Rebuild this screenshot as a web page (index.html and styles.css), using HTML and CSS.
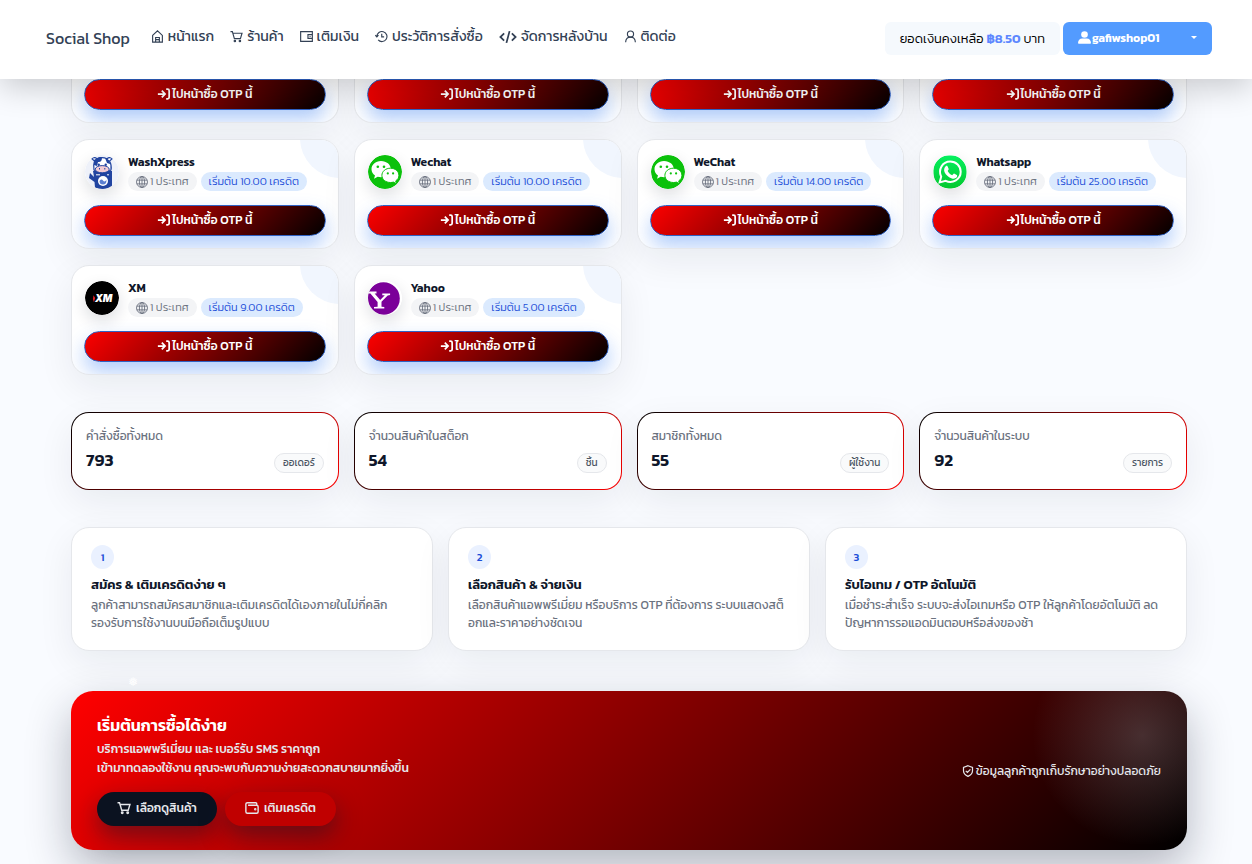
FILE: index.html
```html
<!DOCTYPE html>
<html lang="th">
<head>
  <meta charset="UTF-8" />
  <meta name="viewport" content="width=device-width, initial-scale=1.0" />
  <title>Social Shop</title>
  <link rel="stylesheet" href="styles.css">
</head>
<body>
  <!-- shared icons -->
  <svg class="sprite" aria-hidden="true">
    <symbol id="i-home" viewBox="0 0 16 16"><path d="M2 6.700 8 1l6 5.700v8.300H2z M5.700 14.800V9.200h4.600v5.600 M5.700 11.800h4.600"/></symbol>
    <symbol id="i-cart" viewBox="0 0 16 16"><path d="M.6 2h2.300l2.500 8.600h7.400l2-6.600H3.600"/><circle cx="6" cy="13.500" r=".9"/><circle cx="12.200" cy="13.500" r=".9"/></symbol>
    <symbol id="i-wallet" viewBox="0 0 16 16"><path d="M.8 2h14.400v12H.8z M15 5.700H9.800v4.600H15 M11.800 8h1.200"/></symbol>
    <symbol id="i-history" viewBox="0 0 16 16"><path d="M2.300 8a6.200 6.200 0 1 1 1.600 4.200 M.4 6.400l1.900 2 2-2 M8.300 4.600v3.900h2.900"/></symbol>
    <symbol id="i-code" viewBox="0 0 20 16"><path d="M5.600 3.800 1.300 8l4.300 4.200 M14.400 3.800 18.700 8l-4.300 4.200 M11.800 1.300 8.200 14.700"/></symbol>
    <symbol id="i-person" viewBox="0 0 16 16"><circle cx="8" cy="5" r="3.800"/><path d="M2 15C2.200 11 4.400 8.800 8 8.800s5.800 2.200 6 6.200"/></symbol>
    <symbol id="i-user" viewBox="0 0 16 16"><circle cx="8" cy="4.300" r="4.100"/><path d="M1 15.800c-.6 0-1-.3-1-1 0-3.500 2.200-5.700 5.200-5.700h5.600c3 0 5.200 2.200 5.200 5.700 0 .7-.4 1-1 1z"/></symbol>
    <symbol id="i-login" viewBox="0 0 16 16"><path d="M1 8h8 M5.500 4.200 9.200 8l-3.700 3.800 M10.500 2.500h1.600c1.200 0 1.800.7 1.800 1.800v7.400c0 1.100-.6 1.800-1.800 1.800h-1.600"/></symbol>
    <symbol id="i-globe" viewBox="0 0 16 16"><circle cx="8" cy="8" r="7.300"/><ellipse cx="8" cy="8" rx="3.500" ry="7.300"/><path d="M1.200 5.500h13.600 M1.200 10.500h13.600 M8 .8v14.400"/></symbol>
    <symbol id="i-purse" viewBox="0 0 16 16"><path d="M13.500 4.800V3.300c0-.8-.5-1.300-1.300-1.300H2.800C1.700 2 1 2.700 1 3.500v8.800C1 13.300 1.700 14 2.700 14h10.600c1 0 1.700-.7 1.700-1.700V6.500c0-1-.7-1.700-1.700-1.700H3.500"/><circle cx="11.700" cy="9.400" r=".6"/></symbol>
    <symbol id="i-shield" viewBox="0 0 16 16"><path d="M8 1 14 3.100v4.600c0 3.500-2.500 6-6 7.400-3.500-1.400-6-3.900-6-7.400V3.100z M5 7.800l2.200 2.200 4-4.200"/></symbol>
    <symbol id="logo-wechat" viewBox="0 0 34 34">
      <circle cx="17" cy="17" r="17" fill="#0bc10b"/>
      <path fill="#fff" d="M13 6C7.400 6 3.500 9.700 3.500 14.200c0 2.600 1.300 4.800 3.500 6.300l-1 3.200 3.700-1.900c1.100.3 2.100.4 3.300.4 5.600 0 9.800-3.600 9.800-8.100S18.600 6 13 6z"/>
      <path fill="#fff" stroke="#0bc10b" d="M22.500 13.200c-4.800 0-8.600 3.100-8.600 7.200s3.800 7.100 8.600 7.100c1 0 2-.1 2.900-.4l3.200 1.700-.9-2.900c2-1.300 3.200-3.200 3.200-5.500 0-4.100-3.700-7.200-8.400-7.200z"/>
      <g fill="#0bc10b"><circle cx="9.800" cy="11.700" r="1.300"/><circle cx="16" cy="11.700" r="1.300"/><circle cx="19.800" cy="18.400" r="1.100"/><circle cx="25.100" cy="18.400" r="1.100"/></g>
    </symbol>
    <symbol id="logo-whatsapp" viewBox="0 0 34 34">
      <linearGradient id="wa" x2="0" y2="1"><stop stop-color="#05f05f"/><stop offset="1" stop-color="#04c82f"/></linearGradient>
      <rect x=".5" y=".5" width="33" height="33" rx="15" fill="url(#wa)"/>
      <path fill="none" stroke="#fff" stroke-width="2" d="m6.600 27.400 1.600-5.700C4.800 14.800 9.300 6.500 17.200 6.500c6 0 10.500 4.600 10.500 10.300 0 7.500-8 12.500-15 9.100z"/>
      <path fill="#fff" d="M12.700 11.200c.5-.5 1.500-.5 1.800.1l1.200 2.700c.2.700-.9 1.500-1 2 .9 1.900 2.400 3.300 4.500 4.200.6-.1 1.300-1.700 1.900-1.600l2.700 1.300c.7.400.3 2-.3 2.700-1.300 1.300-3.200 1.400-5.200.6-3-1.100-5.400-3.300-6.700-6-.9-2-.5-4.600 1.100-6z"/>
    </symbol>
    <symbol id="logo-wash" viewBox="0 0 34 34">
      <circle cx="17" cy="17" r="17" fill="#eef1f9"/>
      <path fill="#2144a0" d="M8 16h19v16.500q-9.500 3-17 0L9.500 27 4 23l1-5 4 4z"/>
      <path fill="#fff" stroke="#2144a0" stroke-width="1.200" d="m9.500 6-3-2.600Q10 1.600 12 3.800q5-2.300 10 0 2-2.300 5.500-.4l-3 2.600q2.400 4 1.500 9-8.600 6-17 0-.9-5 .5-9z"/>
      <path fill="#2144a0" d="M9 5q6-4 8-2.500 0 5-4 4.500l-1 4-3-1z M20 3q5 1 5 6l-3-1z"/>
      <circle cx="13.700" cy="9.700" r="1.200" fill="#2144a0"/><circle cx="20.700" cy="9.700" r="1.200" fill="#2144a0"/>
      <ellipse cx="17.200" cy="14.200" rx="7" ry="3.600" fill="#f3cbd3" stroke="#2144a0"/>
      <path stroke="#2144a0" d="M14.500 13v1.500 M19.800 13v1.500"/>
      <circle cx="18" cy="26" r="5" fill="#fff"/><path fill="#5a7ed0" d="M14.500 26q2-2.500 3.500-.5t3.500-.5q0 4.500-3.500 4.500t-3.500-3.500z"/>
      <path stroke="#fff" d="M11 19.800h4 M22 19.800h2"/>
    </symbol>
    <symbol id="logo-yahoo" viewBox="0 0 34 34">
      <circle cx="17" cy="17" r="17" fill="#fff"/>
      <circle cx="15.500" cy="17.500" r="16.300" fill="#7b0099"/>
      <path fill="#fff" d="M0 10.600h8.500v1.800H6.600l5.600 6.500 4.600-4.600h-2.500v-1.900h7.800v1.700l-2.400.4-6.200 6.300v5l2.800.3v1.500H6v-1.500l3.600-.3v-4.700L2.400 12.600 0 12.400z"/>
    </symbol>
  </svg>

  <header class="navbar">
    <a class="brand" href="#">Social Shop</a>
    <nav>
      <a href="#"><svg class="icon"><use href="#i-home"/></svg> หน้าแรก</a>
      <a href="#"><svg class="icon"><use href="#i-cart"/></svg> ร้านค้า</a>
      <a href="#"><svg class="icon"><use href="#i-wallet"/></svg> เติมเงิน</a>
      <a href="#"><svg class="icon"><use href="#i-history"/></svg> ประวัติการสั่งซื้อ</a>
      <a href="#"><svg class="icon icon-code"><use href="#i-code"/></svg> จัดการหลังบ้าน</a>
      <a href="#"><svg class="icon"><use href="#i-person"/></svg> ติดต่อ</a>
    </nav>
    <div class="account">
      <div class="balance">ยอดเงินคงเหลือ <b>฿8.50</b> บาท</div>
      <button type="button" class="user"><svg class="icon solid"><use href="#i-user"/></svg><span>gafiwshop01</span><i class="caret"></i></button>
    </div>
  </header>

  <main>
    <section class="apps">
      <article class="card app app-tail"><a class="buy" href="#"><svg class="icon"><use href="#i-login"/></svg>ไปหน้าซื้อ OTP นี้</a></article>
      <article class="card app app-tail"><a class="buy" href="#"><svg class="icon"><use href="#i-login"/></svg>ไปหน้าซื้อ OTP นี้</a></article>
      <article class="card app app-tail"><a class="buy" href="#"><svg class="icon"><use href="#i-login"/></svg>ไปหน้าซื้อ OTP นี้</a></article>
      <article class="card app app-tail"><a class="buy" href="#"><svg class="icon"><use href="#i-login"/></svg>ไปหน้าซื้อ OTP นี้</a></article>

      <article class="card app">
        <div class="app-head">
          <svg class="logo"><use href="#logo-wash"/></svg>
          <div>
            <h3>WashXpress</h3>
            <div class="tags"><span class="tag"><svg class="icon"><use href="#i-globe"/></svg>1 ประเทศ</span><span class="tag price">เริ่มต้น 10.00 เครดิต</span></div>
          </div>
        </div>
        <a class="buy" href="#"><svg class="icon"><use href="#i-login"/></svg>ไปหน้าซื้อ OTP นี้</a>
      </article>
      <article class="card app">
        <div class="app-head">
          <svg class="logo"><use href="#logo-wechat"/></svg>
          <div>
            <h3>Wechat</h3>
            <div class="tags"><span class="tag"><svg class="icon"><use href="#i-globe"/></svg>1 ประเทศ</span><span class="tag price">เริ่มต้น 10.00 เครดิต</span></div>
          </div>
        </div>
        <a class="buy" href="#"><svg class="icon"><use href="#i-login"/></svg>ไปหน้าซื้อ OTP นี้</a>
      </article>
      <article class="card app">
        <div class="app-head">
          <svg class="logo"><use href="#logo-wechat"/></svg>
          <div>
            <h3>WeChat</h3>
            <div class="tags"><span class="tag"><svg class="icon"><use href="#i-globe"/></svg>1 ประเทศ</span><span class="tag price">เริ่มต้น 14.00 เครดิต</span></div>
          </div>
        </div>
        <a class="buy" href="#"><svg class="icon"><use href="#i-login"/></svg>ไปหน้าซื้อ OTP นี้</a>
      </article>
      <article class="card app">
        <div class="app-head">
          <svg class="logo"><use href="#logo-whatsapp"/></svg>
          <div>
            <h3>Whatsapp</h3>
            <div class="tags"><span class="tag"><svg class="icon"><use href="#i-globe"/></svg>1 ประเทศ</span><span class="tag price">เริ่มต้น 25.00 เครดิต</span></div>
          </div>
        </div>
        <a class="buy" href="#"><svg class="icon"><use href="#i-login"/></svg>ไปหน้าซื้อ OTP นี้</a>
      </article>
      <article class="card app">
        <div class="app-head">
          <svg class="logo" viewBox="0 0 34 34">
            <circle cx="17" cy="17" r="17" fill="#000"/>
            <path fill="#e21d24" d="m8.500 14.300 1.700 2.700-1.300 4.200q-1.700-3.600-.4-6.900z"/>
            <text class="xm" x="10" y="21">XM</text>
          </svg>
          <div>
            <h3>XM</h3>
            <div class="tags"><span class="tag"><svg class="icon"><use href="#i-globe"/></svg>1 ประเทศ</span><span class="tag price">เริ่มต้น 9.00 เครดิต</span></div>
          </div>
        </div>
        <a class="buy" href="#"><svg class="icon"><use href="#i-login"/></svg>ไปหน้าซื้อ OTP นี้</a>
      </article>
      <article class="card app">
        <div class="app-head">
          <svg class="logo"><use href="#logo-yahoo"/></svg>
          <div>
            <h3>Yahoo</h3>
            <div class="tags"><span class="tag"><svg class="icon"><use href="#i-globe"/></svg>1 ประเทศ</span><span class="tag price">เริ่มต้น 5.00 เครดิต</span></div>
          </div>
        </div>
        <a class="buy" href="#"><svg class="icon"><use href="#i-login"/></svg>ไปหน้าซื้อ OTP นี้</a>
      </article>
    </section>

    <section class="stats">
      <div class="stat"><p>คำสั่งซื้อทั้งหมด</p><div class="stat-row"><strong>793</strong><span>ออเดอร์</span></div></div>
      <div class="stat"><p>จำนวนสินค้าในสต็อก</p><div class="stat-row"><strong>54</strong><span>ชิ้น</span></div></div>
      <div class="stat"><p>สมาชิกทั้งหมด</p><div class="stat-row"><strong>55</strong><span>ผู้ใช้งาน</span></div></div>
      <div class="stat"><p>จำนวนสินค้าในระบบ</p><div class="stat-row"><strong>92</strong><span>รายการ</span></div></div>
    </section>

    <section class="steps">
      <div class="card step">
        <span class="num">1</span>
        <h3>สมัคร &amp; เติมเครดิตง่าย ๆ</h3>
        <p>ลูกค้าสามารถสมัครสมาชิกและเติมเครดิตได้เองภายในไม่กี่คลิก<br>รองรับการใช้งานบนมือถือเต็มรูปแบบ</p>
      </div>
      <div class="card step">
        <span class="num">2</span>
        <h3>เลือกสินค้า &amp; จ่ายเงิน</h3>
        <p>เลือกสินค้าแอพพรีเมี่ยม หรือบริการ OTP ที่ต้องการ ระบบแสดงสต็<br>อกและราคาอย่างชัดเจน</p>
      </div>
      <div class="card step">
        <span class="num">3</span>
        <h3>รับไอเทม / OTP อัตโนมัติ</h3>
        <p>เมื่อชำระสำเร็จ ระบบจะส่งไอเทมหรือ OTP ให้ลูกค้าโดยอัตโนมัติ ลด<br>ปัญหาการรอแอดมินตอบหรือส่งของช้า</p>
      </div>
    </section>

    <section class="cta">
      <span class="snow">❅</span>
      <div>
        <h2>เริ่มต้นการซื้อได้ง่าย</h2>
        <p>บริการแอพพรีเมี่ยม และ เบอร์รับ SMS ราคาถูก<br>เข้ามาทดลองใช้งาน คุณจะพบกับความง่ายสะดวกสบายมากยิ่งขึ้น</p>
        <div class="cta-buttons">
          <a class="pill dark" href="#"><svg class="icon"><use href="#i-cart"/></svg>เลือกดูสินค้า</a>
          <a class="pill red" href="#"><svg class="icon"><use href="#i-purse"/></svg>เติมเครดิต</a>
        </div>
      </div>
      <div class="safe"><svg class="icon"><use href="#i-shield"/></svg>ข้อมูลลูกค้าถูกเก็บรักษาอย่างปลอดภัย</div>
    </section>
  </main>
</body>
</html>
```

FILE: styles.css
```css
* { box-sizing: border-box; margin: 0; padding: 0; }
body {
  font-family: 'Kanit', 'Noto Sans Thai', 'Noto Sans', sans-serif;
  background: #f9fbff;
  color: #0f172a;
  font-size: 12px;
  min-height: 100vh;
  overflow-x: hidden;
}
a { color: inherit; text-decoration: none; }
.sprite { position: absolute; width: 0; height: 0; }
.icon {
  width: 12px;
  height: 12px;
  flex: none;
  fill: none;
  stroke: currentColor;
  stroke-width: 1.3;
}
.icon.solid { width: 13px; height: 13px; fill: currentColor; stroke: none; }

/* navbar */
.navbar {
  position: relative;
  z-index: 2;
  display: flex;
  align-items: center;
  height: 79px;
  padding: 0 40px 2px 46px;
  background: #fff;
  box-shadow: 0 8px 32px rgba(0,0,0,0.2);
  color: #334155;
  white-space: nowrap;
}
.brand { margin: 0 13px 2px 0; font-size: 16px; }
nav { display: flex; margin-bottom: 3px; }
nav a {
  display: flex;
  align-items: center;
  gap: 4px;
  padding: 0 8px;
  font-size: 14px;
  line-height: 24px;
}
nav .icon { width: 13px; height: 13px; margin-bottom: 2px; stroke-width: 1.4; }
nav .icon-code { width: 18px; height: 14px; margin-bottom: 0; stroke-width: 2; }
.account { display: flex; gap: 3px; margin-left: auto; }
.balance {
  padding: 0 15px;
  border-radius: 6px;
  background: #f5f9fd;
  color: #000;
  font-size: 13px;
  font-weight: 300;
  line-height: 33px;
}
.balance b { color: #5d87ff; font-weight: 600; }
.user {
  display: flex;
  align-items: center;
  gap: 1px;
  width: 149px;
  height: 33px;
  padding: 0 15px 2px;
  border: none;
  border-radius: 6px;
  background: #539bff;
  color: #fff;
  font: 600 12px 'Kanit', 'Noto Sans', sans-serif;
}
.caret {
  margin-left: auto;
  border: 3px solid transparent;
  border-top-color: #fff;
  border-bottom: 0;
}

/* layout */
main { padding: 0 65px 14px 71px; }
.card {
  background: #fff;
  border: 1px solid #e5e7eb;
  border-radius: 18px;
  box-shadow: 0 12px 36px rgba(15,23,42,0.07);
}
.apps, .stats {
  display: grid;
  grid-template-columns: repeat(4, minmax(0, 1fr));
  gap: 16px 15px;
}

/* app cards */
.app {
  position: relative;
  overflow: hidden;
  padding: 12px;
}
.app::before {
  content: '';
  position: absolute;
  top: -42px;
  right: -42px;
  width: 80px;
  height: 80px;
  border-radius: 50%;
  background: #f1f6fe;
}
.app-tail {
  padding-top: 0;
  border-top: 0;
  border-radius: 0 0 18px 18px;
}
.app-tail::before { display: none; }
.app-head {
  display: flex;
  align-items: center;
  gap: 9px;
  height: 40px;
  margin-bottom: 13px;
  white-space: nowrap;
}
.logo {
  width: 34px;
  height: 34px;
  margin-left: 1px;
  flex: none;
  border-radius: 50%;
  box-shadow: 0 6px 16px rgba(15,23,42,0.14);
}
.xm { fill: #fff; font: italic 900 10px Inter, sans-serif; }
.app-head h3 { font-size: 12px; font-weight: 600; line-height: 19px; }
.tags { display: flex; gap: 4px; }
.tag {
  display: flex;
  align-items: center;
  gap: 2px;
  padding: 0 8px;
  border-radius: 10px;
  background: #f3f4f6;
  color: #6b7280;
  font-size: 11px;
  font-weight: 300;
  line-height: 19px;
}
.tag .icon { stroke-width: 1.2; }
.tag.price { background: #dbeafe; color: #1d4ed8; }
.buy {
  position: relative;
  display: flex;
  align-items: center;
  justify-content: center;
  gap: 1px;
  height: 31px;
  padding-bottom: 2px;
  border: 1px solid #2f62c4;
  border-radius: 16px;
  background: linear-gradient(135deg, #f00, #000) border-box;
  box-shadow: 0 10px 20px rgba(59,130,246,0.4);
  color: #fff;
  font-size: 12px;
  font-weight: 500;
}
.buy .icon { width: 14px; height: 14px; stroke-width: 2; }

/* stats */
.stats { margin-top: 37px; }
.stat {
  padding: 13px 14px;
  height: 78px;
  border: 1px solid transparent;
  border-radius: 18px;
  background: linear-gradient(#fff, #fff) padding-box, linear-gradient(135deg, #000, #f00) border-box;
  box-shadow: 0 12px 36px rgba(15,23,42,0.07);
}
.stat p { color: #6b7280; font-size: 12px; line-height: 20px; }
.stat-row { display: flex; justify-content: space-between; align-items: center; }
.stat-row strong { font-size: 17px; font-weight: 600; line-height: 28px; }
.stat-row span {
  margin-top: 5px;
  padding: 0 8px;
  border: 1px solid #e5e7eb;
  border-radius: 10px;
  background: #f9fafb;
  color: #4b5563;
  font-size: 10px;
  line-height: 18px;
}

/* steps */
.steps {
  display: grid;
  grid-template-columns: repeat(3, minmax(0, 1fr));
  gap: 15px;
  margin-top: 37px;
}
.step { padding: 17px 19px; height: 124px; white-space: nowrap; }
.num {
  display: block;
  width: 23px;
  height: 24px;
  border-radius: 50%;
  background: #eaf1ff;
  color: #1d4ed8;
  font-size: 11px;
  font-weight: 500;
  line-height: 24px;
  text-align: center;
}
.step h3 { margin: 5px 0 1px; font-size: 13px; font-weight: 600; line-height: 21px; }
.step p { color: #6b7280; font-size: 12px; line-height: 18px; }

/* call to action */
.cta {
  position: relative;
  display: flex;
  align-items: center;
  justify-content: space-between;
  margin-top: 40px;
  padding: 24px 26px;
  height: 159px;
  border-radius: 22px;
  background:
    radial-gradient(circle at 96% 28%, rgba(226,232,240,0.2), transparent 110px),
    linear-gradient(135deg, #f00, #000);
  box-shadow: 0 18px 45px rgba(15,23,42,0.3);
  color: #e5e7eb;
  white-space: nowrap;
}
.cta h2 { margin-bottom: 5px; color: #fff; font-size: 16px; font-weight: 600; line-height: 20px; }
.cta p { font-size: 12px; font-weight: 500; line-height: 19px; }
.cta-buttons { display: flex; gap: 8px; margin-top: 14px; }
.pill {
  display: flex;
  align-items: center;
  gap: 5px;
  height: 34px;
  padding: 0 20px 2px;
  border-radius: 17px;
  box-shadow: 0 10px 25px rgba(15,23,42,0.5);
  font-size: 12px;
  font-weight: 500;
}
.pill .icon { width: 14px; height: 14px; stroke-width: 1.6; }
.dark { background: #0b1220; }
.red { background: #c00000; }
.safe { display: flex; align-items: center; gap: 2px; font-size: 12px; font-weight: 400; }
.safe .icon { stroke-width: 1.6; }
.snow {
  position: absolute;
  top: -19px;
  left: 57px;
  color: #fff;
  font-size: 12px;
  line-height: 20px;
}
```
